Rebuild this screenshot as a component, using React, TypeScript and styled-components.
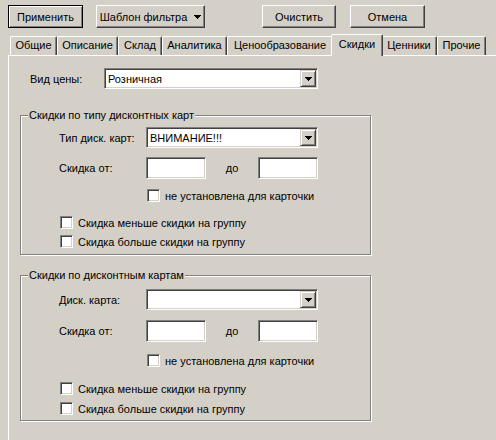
import styled, { createGlobalStyle, css } from "styled-components";

const GlobalStyle = createGlobalStyle`
  html, body {
    margin: 0;
    padding: 0;
    background: #d4d0c8;
  }
  body {
    font-family: "Liberation Sans", Arial, sans-serif;
    font-size: 11px;
    color: #000;
  }
`;

const Window = styled.div`
  width: 496px;
  height: 440px;
  overflow: hidden;
  background: #d4d0c8;
  display: flex;
  flex-direction: column;
`;

const Toolbar = styled.div`
  display: flex;
  align-items: center;
  padding: 5px 0 0 8px;
`;

const Button = styled.button<{ $w: number; $gap?: number; $default?: boolean }>`
  box-sizing: border-box;
  width: ${(p) => p.$w}px;
  height: 23px;
  margin: 0 0 0 ${(p) => p.$gap ?? 0}px;
  padding: 0;
  font: inherit;
  color: #000;
  background: #d4d0c8;
  border: 1px solid;
  border-color: #fff #404040 #404040 #fff;
  box-shadow: inset -1px -1px 0 #808080;
  display: flex;
  align-items: center;
  justify-content: center;
  gap: 7px;

  ${(p) =>
    p.$default &&
    css`
      border-color: #000;
      box-shadow: inset 1px 1px 0 #fff, inset -1px -1px 0 #808080;
    `}
`;

const Arrow = () => (
  <svg width="7" height="4" viewBox="0 0 7 4" shapeRendering="crispEdges">
    <rect x="0" y="0" width="7" height="1" fill="#000" />
    <rect x="1" y="1" width="5" height="1" fill="#000" />
    <rect x="2" y="2" width="3" height="1" fill="#000" />
    <rect x="3" y="3" width="1" height="1" fill="#000" />
  </svg>
);

const TabStrip = styled.div`
  display: flex;
  align-items: flex-end;
  height: 22px;
  margin-top: 5px;
  padding-left: 10px;
  position: relative;
  z-index: 1;
`;

const Tab = styled.div<{ $w: number; $active?: boolean }>`
  box-sizing: border-box;
  width: ${(p) => p.$w}px;
  height: 19px;
  padding: 0;
  line-height: 17px;
  text-align: center;
  white-space: nowrap;
  background: #d4d0c8;
  border: 1px solid;
  border-bottom: none;
  border-color: #fff #404040 transparent #fff;
  border-radius: 2px 2px 0 0;
  box-shadow: inset -1px 0 0 #808080;

  ${(p) =>
    p.$active &&
    css`
      width: ${p.$w + 4}px;
      height: 22px;
      margin: 0 -2px -1px;
      line-height: 18px;
      position: relative;
      z-index: 2;
    `}
`;

const Panel = styled.div`
  flex: 1;
  margin-left: 8px;
  border-top: 1px solid #fff;
  border-left: 1px solid #fff;
  display: flex;
  flex-direction: column;
  padding: 12px 0 0 11px;
`;

const PriceRow = styled.div`
  display: flex;
  align-items: center;
  padding-left: 10px;
`;

const PriceLabel = styled.span`
  width: 74px;
  flex: none;
`;

const sunken = css`
  box-sizing: border-box;
  background: #fff;
  border: 1px solid;
  border-color: #808080 #fff #fff #808080;
  box-shadow: inset 1px 1px 0 #404040, inset -1px -1px 0 #d4d0c8;
`;

const Combo = styled.div<{ $w: number }>`
  ${sunken};
  width: ${(p) => p.$w}px;
  height: 21px;
  display: flex;
  align-items: center;
  padding: 1px 1px 1px 3px;
`;

const ComboValue = styled.span`
  flex: 1;
  overflow: hidden;
  white-space: nowrap;
`;

const DropButton = styled.span`
  box-sizing: border-box;
  width: 16px;
  height: 17px;
  flex: none;
  background: #d4d0c8;
  border: 1px solid;
  border-color: #d4d0c8 #404040 #404040 #d4d0c8;
  box-shadow: inset 1px 1px 0 #fff, inset -1px -1px 0 #808080;
  display: flex;
  align-items: center;
  justify-content: center;
`;

const TextBox = styled.div`
  ${sunken};
  width: 60px;
  height: 22px;
`;

const CheckBox = styled.span`
  ${sunken};
  width: 13px;
  height: 13px;
  flex: none;
`;

const Group = styled.fieldset<{ $mt: number }>`
  box-sizing: border-box;
  width: 351px;
  min-width: 0;
  margin: ${(p) => p.$mt}px 0 0;
  padding: 0;
  border: 1px solid #808080;
  box-shadow: inset 1px 1px 0 #fff, 1px 1px 0 #fff;
`;

const Caption = styled.legend`
  margin-left: 7px;
  padding: 0 1px;
  line-height: 13px;
  background: #d4d0c8;
`;

const GroupBody = styled.div<{ $top: number; $bottom: number }>`
  display: flex;
  flex-direction: column;
  padding: ${(p) => p.$top}px 0 ${(p) => p.$bottom}px 38px;
`;

const FieldRow = styled.div<{ $mt?: number }>`
  display: flex;
  align-items: center;
  margin-top: ${(p) => p.$mt ?? 0}px;
`;

const FieldLabel = styled.span`
  width: 87px;
  flex: none;
`;

const Range = styled.div`
  width: 172px;
  display: flex;
  align-items: center;
  justify-content: space-between;
`;

const CheckRow = styled.label<{ $mt: number; $indent: number }>`
  display: flex;
  align-items: center;
  gap: 5px;
  height: 13px;
  margin-top: ${(p) => p.$mt}px;
  padding-left: ${(p) => p.$indent}px;
  white-space: nowrap;
`;

const tabs: [string, number][] = [
  ["Общие", 47],
  ["Описание", 61],
  ["Склад", 44],
  ["Аналитика", 65],
  ["Ценообразование", 106],
  ["Скидки", 48],
  ["Ценники", 56],
  ["Прочие", 49],
];

type GroupProps = {
  title: string;
  label: string;
  value: string;
  mt: number;
  top: number;
  bottom: number;
  gaps: [number, number, number, number];
};

const DiscountGroup = ({ title, label, value, mt, top, bottom, gaps }: GroupProps) => (
  <Group $mt={mt}>
    <Caption>{title}</Caption>
    <GroupBody $top={top} $bottom={bottom}>
      <FieldRow>
        <FieldLabel>{label}</FieldLabel>
        <Combo $w={172}>
          <ComboValue>{value}</ComboValue>
          <DropButton>
            <Arrow />
          </DropButton>
        </Combo>
      </FieldRow>
      <FieldRow $mt={gaps[0]}>
        <FieldLabel>Скидка от:</FieldLabel>
        <Range>
          <TextBox />
          <span>до</span>
          <TextBox />
        </Range>
      </FieldRow>
      <CheckRow $mt={gaps[1]} $indent={88}>
        <CheckBox />
        не установлена для карточки
      </CheckRow>
      <CheckRow $mt={gaps[2]} $indent={1}>
        <CheckBox />
        Скидка меньше скидки на группу
      </CheckRow>
      <CheckRow $mt={gaps[3]} $indent={1}>
        <CheckBox />
        Скидка больше скидки на группу
      </CheckRow>
    </GroupBody>
  </Group>
);

export default function App() {
  return (
    <Window>
      <GlobalStyle />
      <Toolbar>
        <Button $w={75} $default>
          Применить
        </Button>
        <Button $w={109} $gap={13}>
          Шаблон фильтра <Arrow />
        </Button>
        <Button $w={74} $gap={57}>
          Очистить
        </Button>
        <Button $w={75} $gap={14}>
          Отмена
        </Button>
      </Toolbar>

      <TabStrip>
        {tabs.map(([name, w]) => (
          <Tab key={name} $w={w} $active={name === "Скидки"}>
            {name}
          </Tab>
        ))}
      </TabStrip>

      <Panel>
        <PriceRow>
          <PriceLabel>Вид цены:</PriceLabel>
          <Combo $w={214}>
            <ComboValue>Розничная</ComboValue>
            <DropButton>
              <Arrow />
            </DropButton>
          </Combo>
        </PriceRow>

        <DiscountGroup
          mt={20}
          top={5}
          bottom={6}
          gaps={[9, 10, 14, 6]}
          title="Скидки по типу дисконтных карт"
          label="Тип диск. карт:"
          value="ВНИМАНИЕ!!!"
        />
        <DiscountGroup
          mt={14}
          top={7}
          bottom={5}
          gaps={[10, 12, 15, 7]}
          title="Скидки по дисконтным картам"
          label="Диск. карта:"
          value=""
        />
      </Panel>
    </Window>
  );
}
